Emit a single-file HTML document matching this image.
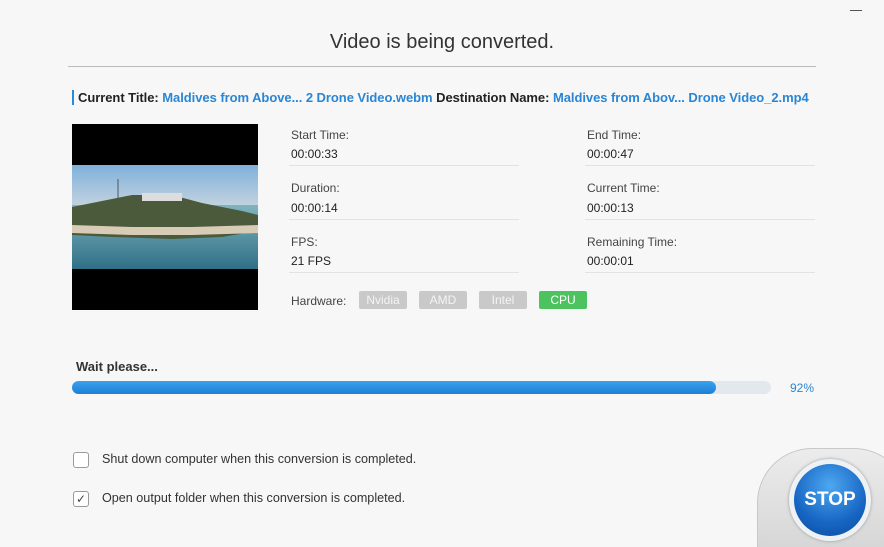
<!DOCTYPE html>
<html><head><style>
html,body{margin:0;width:884px;height:547px;overflow:hidden}
body{background:#f7f7f7;font-family:"Liberation Sans",sans-serif;position:relative;color:#333}
.a{position:absolute;white-space:nowrap}
.lbl{font-size:12px;color:#444}
.val{font-size:12px;color:#222}
.ln{position:absolute;height:1px;background:#e2e2e2;width:230px}
.b{position:absolute;top:291px;height:18px;width:48px;border-radius:2px;background:#c9c9c9;color:#f4f4f4;font-size:12px;text-align:center;line-height:18px}
.cb{position:absolute;left:73px;width:14px;height:14px;border:1px solid #9a9a9a;border-radius:3px;background:#fff}
</style></head><body>
<div class="a" style="right:22px;top:4px;width:12px;border-bottom:1px solid #555;height:6px"></div>
<div class="a" style="left:0;width:884px;text-align:center;top:31px;font-size:20px;color:#333">Video is being converted.</div>
<div class="a" style="left:68px;top:66px;width:748px;height:1px;background:#bbb"></div>
<div class="a" style="left:72px;top:90px;width:2px;height:15px;background:#2a8ad8"></div>
<div class="a" style="left:78px;top:90px;font-size:13px;font-weight:bold;color:#222;letter-spacing:-0.05px">Current Title: <span style="color:#2a86d4">Maldives from Above... 2 Drone Video.webm</span> Destination Name: <span style="color:#2a86d4">Maldives from Abov... Drone Video_2.mp4</span></div>
<div class="a" style="left:72px;top:124px;width:186px;height:186px;background:#000">
<svg width="186" height="104" style="position:absolute;top:41px;left:0">
<defs><linearGradient id="s" x1="0" y1="0" x2="0" y2="1"><stop offset="0" stop-color="#7fb0dc"/><stop offset="1" stop-color="#c9d6df"/></linearGradient>
<linearGradient id="w" x1="0" y1="0" x2="0" y2="1"><stop offset="0" stop-color="#7fb5bf"/><stop offset="1" stop-color="#2f6f86"/></linearGradient></defs>
<rect width="186" height="45" fill="url(#s)"/>
<rect y="40" width="186" height="64" fill="url(#w)"/>
<path d="M0 42 L30 36 L60 30 L100 30 L130 38 L170 46 L186 50 L186 66 L150 72 L100 74 L40 72 L0 70Z" fill="#4a5a3a"/>
<path d="M0 60 L60 62 L120 62 L186 60 L186 68 L120 70 L60 70 L0 68Z" fill="#d8ccb6"/>
<rect x="70" y="28" width="40" height="8" fill="#ddd"/>
<line x1="46" y1="14" x2="46" y2="36" stroke="#555"/>
</svg></div>
<div class="a lbl" style="left:291px;top:128px">Start Time:</div><div class="a val" style="left:291px;top:147px">00:00:33</div><div class="ln" style="left:289px;top:165px"></div>
<div class="a lbl" style="left:291px;top:181px">Duration:</div><div class="a val" style="left:291px;top:201px">00:00:14</div><div class="ln" style="left:289px;top:219px"></div>
<div class="a lbl" style="left:291px;top:235px">FPS:</div><div class="a val" style="left:291px;top:254px">21 FPS</div><div class="ln" style="left:289px;top:272px"></div>
<div class="a lbl" style="left:587px;top:128px">End Time:</div><div class="a val" style="left:587px;top:147px">00:00:47</div><div class="ln" style="left:585px;top:165px"></div>
<div class="a lbl" style="left:587px;top:181px">Current Time:</div><div class="a val" style="left:587px;top:201px">00:00:13</div><div class="ln" style="left:585px;top:219px"></div>
<div class="a lbl" style="left:587px;top:235px">Remaining Time:</div><div class="a val" style="left:587px;top:254px">00:00:01</div><div class="ln" style="left:585px;top:272px"></div>
<div class="a lbl" style="left:291px;top:294px">Hardware:</div>
<div class="b" style="left:359px">Nvidia</div><div class="b" style="left:419px">AMD</div><div class="b" style="left:479px">Intel</div><div class="b" style="left:539px;background:#4cc35e;color:#fff">CPU</div>
<div class="a" style="left:76px;top:359px;font-size:13px;font-weight:bold;color:#333">Wait please...</div>
<div class="a" style="left:72px;top:381px;width:699px;height:13px;border-radius:7px;background:#e3e8ee"></div>
<div class="a" style="left:72px;top:381px;width:644px;height:13px;border-radius:7px;background:linear-gradient(#3aa2ec,#1d7fd6)"></div>
<div class="a" style="left:790px;top:381px;font-size:12px;color:#2a86d4">92%</div>
<div class="cb" style="top:452px"></div>
<div class="a" style="left:102px;top:452px;font-size:12.6px;color:#333">Shut down computer when this conversion is completed.</div>
<div class="cb" style="top:491px;font-size:12px;line-height:14px;text-align:center;color:#444">✓</div>
<div class="a" style="left:102px;top:491px;font-size:12.6px;color:#333">Open output folder when this conversion is completed.</div>
<div class="a" style="left:757px;top:448px;width:150px;height:110px;border-radius:55px 55px 0 0;background:linear-gradient(#ececec,#d4d4d4);border:1px solid #c8c8c8"></div>
<div class="a" style="left:789px;top:459px;width:82px;height:82px;border-radius:50%;background:#eef2f5;box-shadow:0 0 3px #999"></div>
<div class="a" style="left:794px;top:464px;width:72px;height:72px;border-radius:50%;background:radial-gradient(circle at 50% 30%,#4ea8f0,#1766c4 60%,#0b4a9c);"></div>
<div class="a" style="left:794px;top:489px;width:72px;text-align:center;color:#fff;font-weight:bold;font-size:19px">STOP</div>
</body></html>
